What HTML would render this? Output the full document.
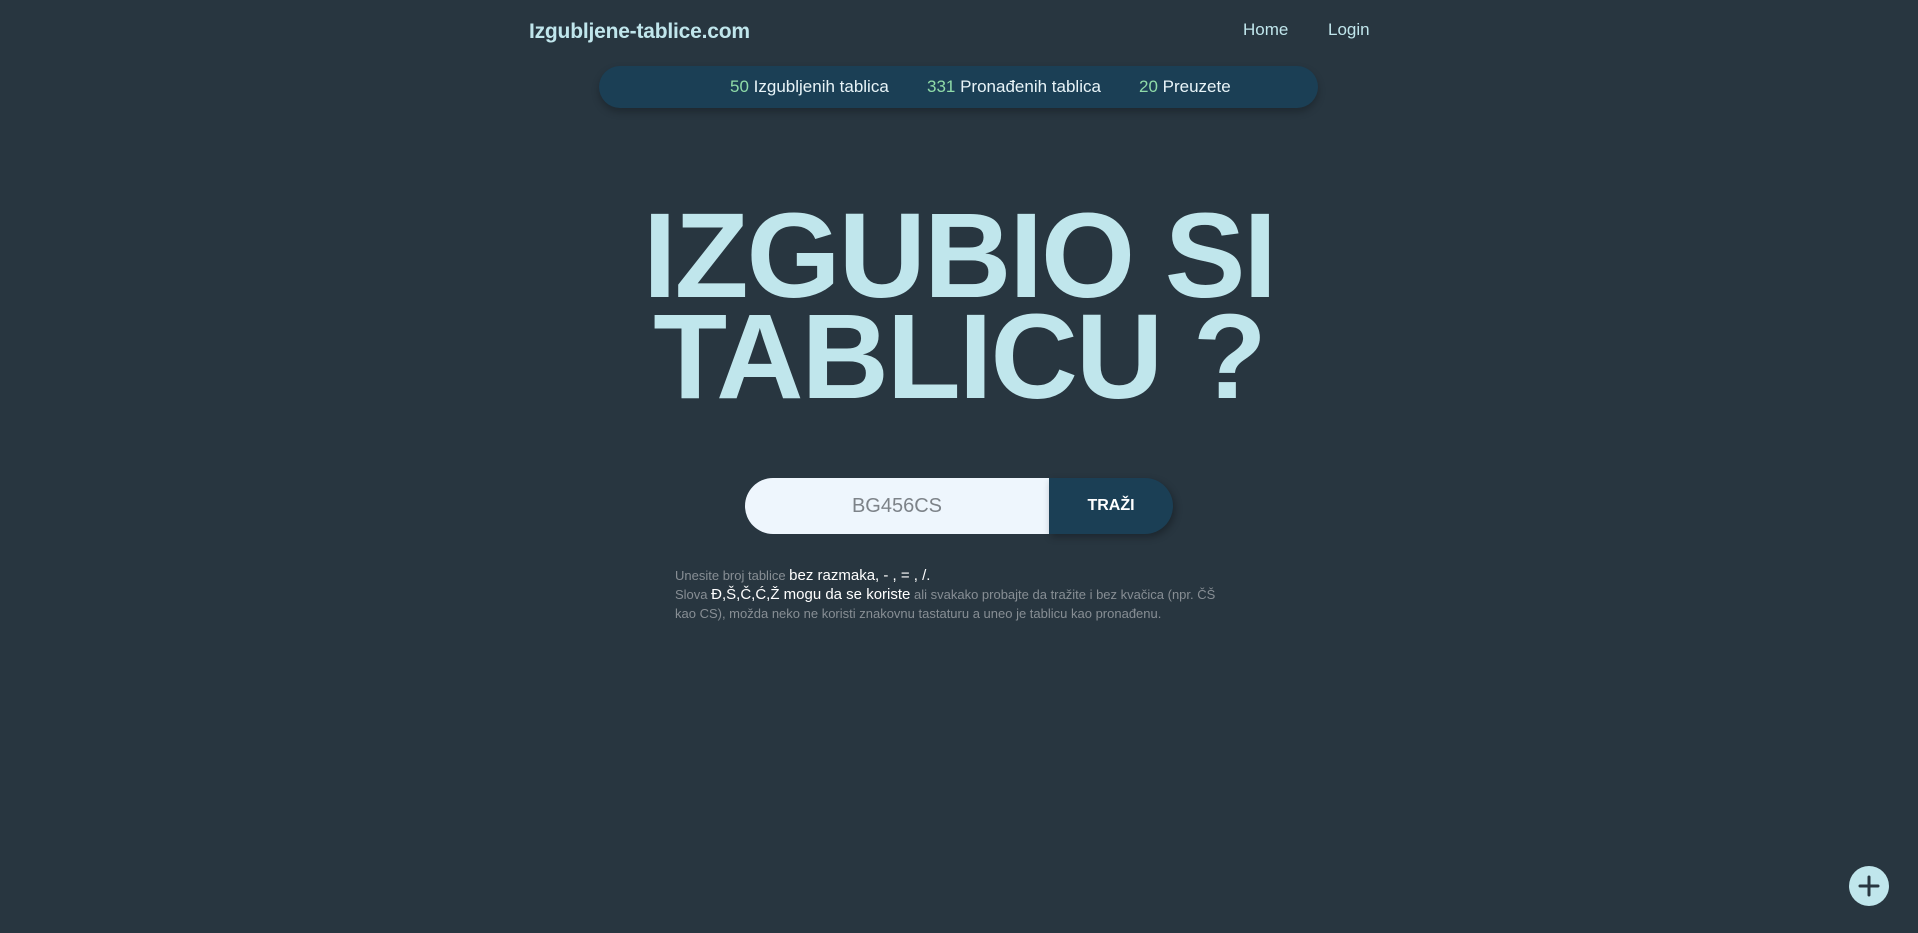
<!DOCTYPE html>
<html><head><meta charset="utf-8"><style>
*{margin:0;padding:0;box-sizing:border-box}
body{width:1918px;height:933px;background:#283640;font-family:"Liberation Sans",sans-serif;position:relative;overflow:hidden}
.logo{position:absolute;left:529px;top:20px;font-size:21px;font-weight:bold;color:#c0e6ec;letter-spacing:-0.2px}
.nav{position:absolute;top:20px;font-size:17px;color:#c0e6ec}
.stats{position:absolute;left:599px;top:66px;width:719px;height:42px;background:#1b3f55;border-radius:21px;box-shadow:0 4px 8px rgba(0,0,0,.25);font-size:17px;color:#e8f4f8}
.stats span{position:absolute;top:11px;white-space:nowrap}
.stats b{font-weight:normal;color:#8fdba8}
h1{position:absolute;left:0;width:1918px;text-align:center;color:#c0e6ec;font-size:121px;font-weight:bold;line-height:101px;top:205px;letter-spacing:-2px}
.inp{position:absolute;left:745px;top:478px;width:304px;height:56px;background:#eef6fd;border-radius:28px 0 0 28px;color:#7d8389;font-size:20px;text-align:center;line-height:56px}
.btn{position:absolute;left:1049px;top:478px;width:124px;height:56px;background:#1b3f55;border-radius:0 28px 28px 0;color:#fff;font-size:16px;font-weight:bold;text-align:center;line-height:56px;box-shadow:2px 3px 8px rgba(0,0,0,.3)}
.help{position:absolute;left:675px;top:566px;width:560px;font-size:13px;color:#878e94;line-height:19px}
.help b{font-weight:normal;color:#fff;font-size:15px}
.plus{position:absolute;left:1849px;top:866px;width:40px;height:40px;border-radius:50%;background:#c0e6ec}
</style></head><body>
<div class="logo">Izgubljene-tablice.com</div>
<div class="nav" style="left:1243px">Home</div>
<div class="nav" style="left:1328px">Login</div>
<div class="stats">
<span style="left:131px"><b>50</b> Izgubljenih tablica</span>
<span style="left:328px"><b>331</b> Pronađenih tablica</span>
<span style="left:540px"><b>20</b> Preuzete</span>
</div>
<h1>IZGUBIO SI<br>TABLICU ?</h1>
<div class="inp">BG456CS</div>
<div class="btn">TRAŽI</div>
<div class="help">Unesite broj tablice <b>bez razmaka, - , = , /.</b><br>Slova <b>Đ,Š,Č,Ć,Ž mogu da se koriste</b> ali svakako probajte da tražite i bez kvačica (npr. ČŠ kao CS), možda neko ne koristi znakovnu tastaturu a uneo je tablicu kao pronađenu.</div>
<div class="plus"><svg width="40" height="40" viewBox="0 0 40 40"><path d="M20 11V29M11 20H29" stroke="#283640" stroke-width="3" stroke-linecap="round"/></svg></div>
</body></html>
